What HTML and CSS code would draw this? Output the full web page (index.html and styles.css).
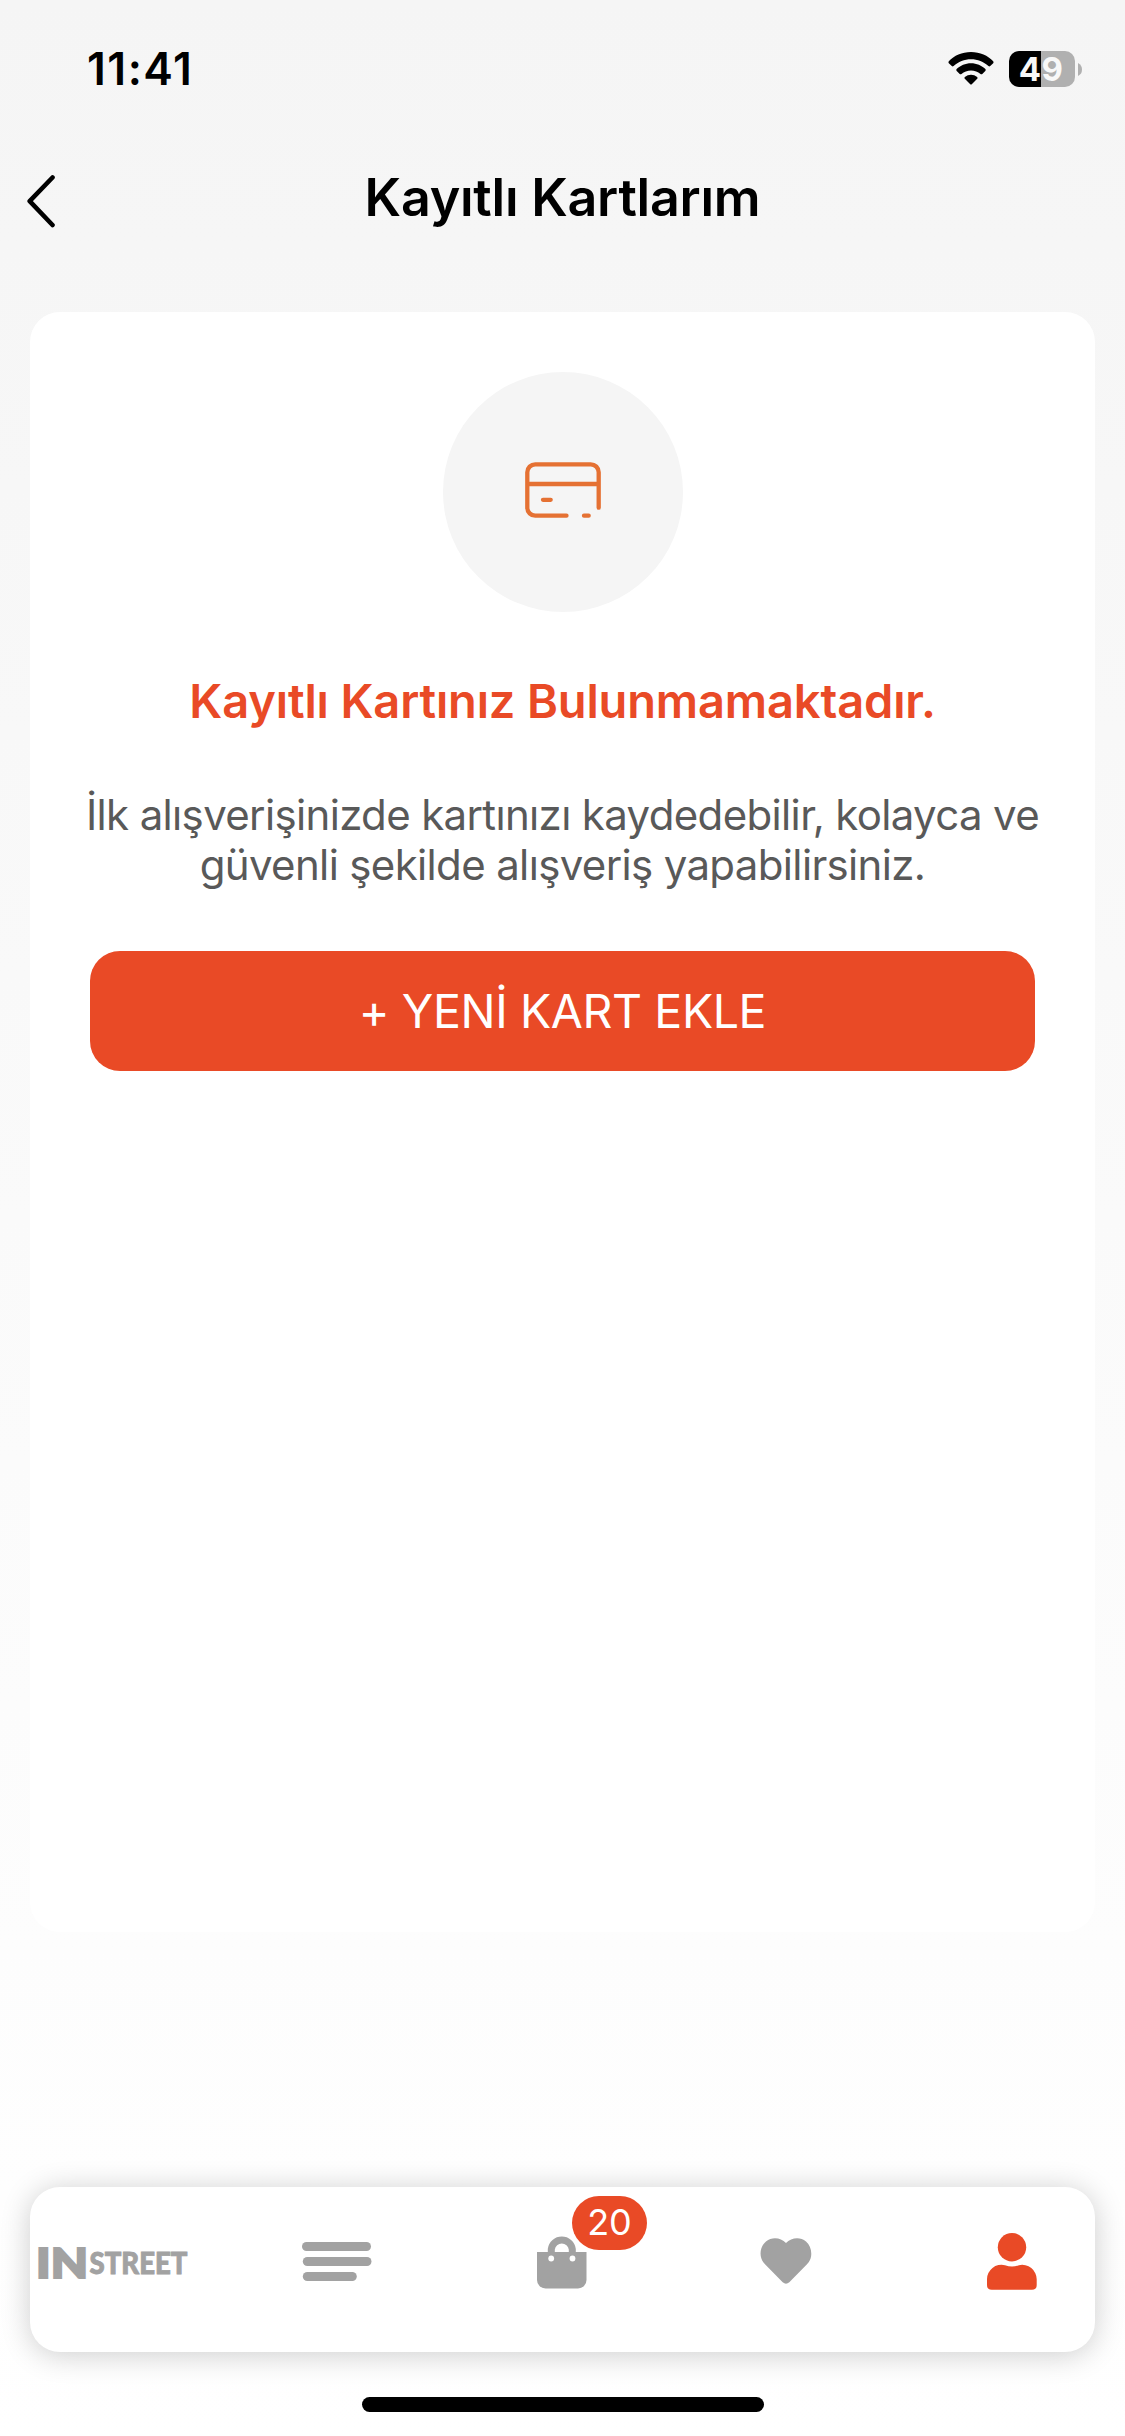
FILE: index.html
```html
<!DOCTYPE html>
<html lang="tr">
<head>
<meta charset="utf-8">
<title>Kayıtlı Kartlarım</title>
<link rel="stylesheet" href="styles.css">
</head>
<body>
<div class="screen">
  <div class="status">
    <span class="time">11:41</span>
    <div class="indicators">
      <svg class="wifi" viewBox="0 0 46 34" width="46" height="34">
        <path d="M23 0C32 0 40 3.600 45.200 9.300Q46 10.300 45.200 11.200L42.200 14.100Q41.300 14.900 40.400 14C35.700 9.700 29.600 7.200 23 7.200S10.300 9.700 5.600 14Q4.700 14.900 3.800 14.100L.8 11.200Q0 10.300.8 9.300C6 3.600 14 0 23 0Z"/>
        <path d="M23 11.200C28.600 11.200 33.700 13.500 37.400 17.100Q38.200 18 37.300 19L34.300 22Q33.400 22.700 32.500 22C29.900 19.700 26.600 18.400 23 18.400S16.100 19.700 13.500 22Q12.600 22.700 11.700 22L8.700 19Q7.800 18 8.600 17.100C12.300 13.500 17.400 11.200 23 11.200Z"/>
        <path d="M23 22.700Q26.400 22.700 29.200 24.900Q30 25.800 29.200 26.700L24 32Q23 33 22 32L16.800 26.700Q16 25.800 16.800 24.900Q19.600 22.700 23 22.700Z"/>
      </svg>
      <div class="battery"><span>49</span></div>
      <svg class="nub" viewBox="0 0 4 13" width="4" height="13"><path d="M0 0Q4 2 4 6.500T0 13Z" fill="#b0b0b0"/></svg>
    </div>
  </div>

  <header class="header">
    <svg class="back" viewBox="0 0 30 54" width="30" height="54"><path d="M26.500 3.500 3.700 27.200 26.500 51" fill="none" stroke="#000" stroke-width="4.600" stroke-linecap="round" stroke-linejoin="round"/></svg>
    <h1 class="title">Kayıtlı Kartlarım</h1>
  </header>

  <main class="panel">
    <div class="circle">
      <svg viewBox="0 0 76 56" width="76" height="56" fill="none" stroke="#e57133" stroke-width="4.300" stroke-linecap="round">
        <path d="M41.500 53.700H10.300A8 8 0 0 1 2.300 45.700V10.300A8 8 0 0 1 10.300 2.300H65.700A8 8 0 0 1 73.700 10.300V45.700M2.300 22H73.700M18 37.800H25.700M59 53.700H63.700"/>
      </svg>
    </div>
    <h2 class="heading">Kayıtlı Kartınız Bulunmamaktadır.</h2>
    <p class="text">İlk alışverişinizde kartınızı kaydedebilir, kolayca ve<br>güvenli şekilde alışveriş yapabilirsiniz.</p>
    <button class="add">+ YENİ KART EKLE</button>
  </main>

  <nav class="nav">
    <a class="item">
      <svg class="logo" viewBox="0 0 150 32" width="150" height="32">
        <text class="logo-in" x="-2" y="31.300" textLength="52" lengthAdjust="spacingAndGlyphs">IN</text>
        <text class="logo-street" x="51.500" y="26.700" textLength="98" lengthAdjust="spacingAndGlyphs">STREET</text>
      </svg>
    </a>
    <a class="item">
      <svg class="menu" viewBox="0 0 70 39" width="70" height="39" fill="#a2a2a2"><rect width="69" height="9" rx="4.500"/><rect x=".8" y="15" width="68.700" height="9" rx="4.500"/><rect x=".8" y="30" width="54" height="9" rx="4.500"/></svg>
    </a>
    <a class="item">
      <svg class="bag" viewBox="0 0 50 54" width="50" height="54">
        <path d="M14.500 19V14.500A10.600 10.600 0 0 1 35.500 14.500V19" transform="translate(-.2 -.3)" fill="none" stroke="#a2a2a2" stroke-width="7"/>
        <path d="M0 17H49.500V45A8.500 8.500 0 0 1 41 53.500H8.500A8.500 8.500 0 0 1 0 45Z" fill="#a2a2a2"/>
        <circle cx="14.200" cy="23.500" r="2.900" fill="#fff"/><circle cx="35.500" cy="23.500" r="2.900" fill="#fff"/>
      </svg>
      <span class="badge">20</span>
    </a>
    <a class="item">
      <svg class="heart" viewBox="0 0 52 46" width="52" height="46" fill="#a2a2a2"><path d="M26 5C31-.2 40-1.700 46 3.500S53 18.600 48.500 24.500Q47.900 25.300 47 26.200L29.300 44.300Q26 47.200 22.700 44.300L5 26.200Q4.100 25.300 3.500 24.500C-1 18.600-.5 9 6 3.500S21-.2 26 5Z"/></svg>
    </a>
    <a class="item">
      <svg class="user" viewBox="0 0 50 57" width="50" height="57" fill="#e94a26"><circle cx="25" cy="14.200" r="14.200"/><path d="M0 46.500A14.500 14.500 0 0 1 18 32.200Q25 34.600 32 32.200A14.500 14.500 0 0 1 49.700 46.500V52Q49.700 56.800 45 56.800H4.700Q0 56.800 0 52Z"/></svg>
    </a>
  </nav>
  <div class="home"></div>
</div>
</body>
</html>
```
FILE: styles.css
```css
* { box-sizing: border-box; }
body { margin: 0; font-family: Inter, "Liberation Sans", sans-serif; }
.screen {
  width: 1125px;
  height: 2436px;
  display: flex;
  flex-direction: column;
  background: linear-gradient(#f5f5f5, #fff);
}
.status {
  height: 138px;
  padding: 0 43px 0 87px;
  display: flex;
  align-items: center;
  justify-content: space-between;
}
.time { font-size: 44.5px; font-weight: 600; letter-spacing: 1.5px; }
.indicators { display: flex; align-items: center; }
.battery {
  width: 66px;
  height: 36px;
  margin: 0 3px 0 15px;
  border-radius: 10px;
  background: linear-gradient(90deg, #000 32px, #b0b0b0 32px);
  color: #f8f8f8;
  font-size: 33px;
  font-weight: 700;
  line-height: 36px;
  text-align: center;
  letter-spacing: 0.5px;
  text-indent: -2px;
}
.header {
  height: 118px;
  padding-left: 26px;
  display: grid;
  grid-template-columns: 30px 1fr 56px;
  align-items: center;
}
.back { margin-top: 7px; }
.title { margin: 1px 0 0; font-size: 52px; font-weight: 600; text-align: center; line-height: 60px; letter-spacing: -0.25px; }
.panel {
  height: 1620px;
  margin: 56px 30px 0;
  padding: 60px 40px 0;
  display: flex;
  flex-direction: column;
  align-items: center;
  border-radius: 30px;
  background: #fff;
}
.circle {
  width: 240px;
  height: 240px;
  display: flex;
  align-items: center;
  justify-content: center;
  padding-bottom: 4px;
  border-radius: 50%;
  background: #f5f5f5;
}
.heading { margin: 60px 0 0; font-size: 47px; font-weight: 600; line-height: 58px; letter-spacing: -0.15px; color: #e94a26; white-space: nowrap; }
.text { margin: 60px 0 0; font-size: 42px; line-height: 50px; letter-spacing: -0.65px; color: #595959; text-align: center; white-space: nowrap; }
.add {
  width: 945px;
  height: 120px;
  margin-top: 61px;
  padding: 0;
  border: 0;
  border-radius: 30px;
  background: #e94a26;
  color: #fff;
  font: 400 46.5px/120px Inter, "Liberation Sans", sans-serif;
  letter-spacing: -0.4px;
}
.nav {
  height: 165px;
  margin: 255px 30px 0;
  display: grid;
  grid-template-columns: repeat(5, 225px);
  justify-content: center;
  border-radius: 30px;
  background: #fff;
  box-shadow: 0 3px 30px rgba(0, 0, 0, 0.2);
}
.item { position: relative; display: flex; align-items: flex-start; justify-content: center; padding-top: 55px; }
.logo { margin-top: 5px; overflow: visible; fill: #a2a2a2; stroke: #a2a2a2; font-family: Lato, sans-serif; font-weight: 900; }
.logo-in { font-size: 42.5px; stroke-width: 2.2px; }
.logo-street { font-size: 30.5px; stroke-width: 0.9px; }
.menu { margin: 4px 0 0 -2px; }
.bag { margin: -7px 0 0 -1px; }
.badge {
  position: absolute;
  left: 122px;
  top: 9px;
  width: 75px;
  height: 54px;
  border-radius: 27px;
  background: #e94a26;
  color: #fff;
  font-size: 36px;
  line-height: 53px;
  text-align: center;
}
.menu { margin-top: 0; }
.heart { margin: -4px 0 0 -3px; }
.user { margin: -9px 0 0 -2px; }
.home { width: 402px; height: 15px; margin: 45px auto 0; border-radius: 8px; background: #000; }
```
